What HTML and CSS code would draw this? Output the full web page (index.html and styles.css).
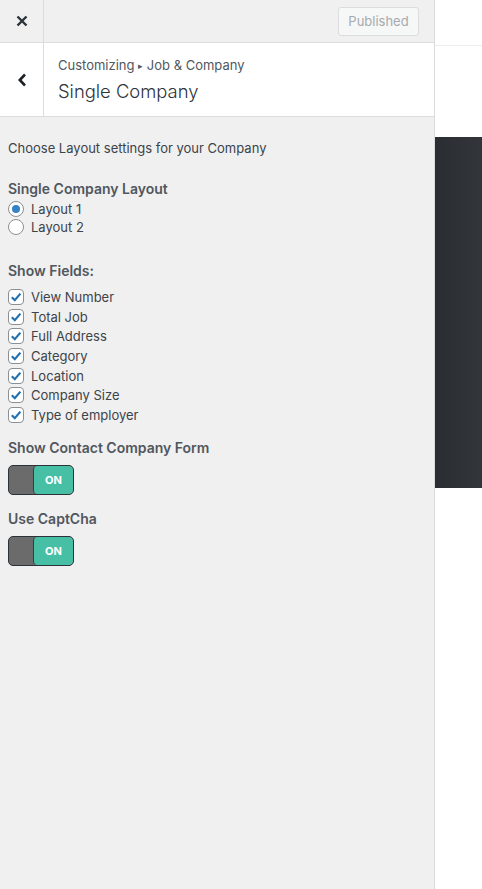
FILE: index.html
```html
<!DOCTYPE html>
<html lang="en">
<head>
  <meta charset="UTF-8">
  <title>Customizing Single Company</title>
  <link rel="stylesheet" href="styles.css">
</head>
<body>
  <div class="sidebar">
    <div class="topbar">
      <div class="close-btn">
        <svg width="12" height="12" viewBox="0 0 12 12"><path d="M1.5 1.5 L10.5 10.5 M10.5 1.5 L1.5 10.5" stroke="#2c3338" stroke-width="2.4"/></svg>
      </div>
      <div class="publish-wrap">
        <button class="publish-btn">Published</button>
      </div>
    </div>

    <div class="section-head">
      <div class="back-btn">
        <svg width="10" height="14" viewBox="0 0 10 14"><path d="M8 1.5 L2.8 7 L8 12.5" stroke="#1d2327" stroke-width="2.6" fill="none"/></svg>
      </div>
      <div class="section-title">
        <div class="crumb">Customizing <span class="sep">&#9656;</span> Job &amp; Company</div>
        <div class="title">Single Company</div>
      </div>
    </div>

    <div class="controls">
      <p class="desc">Choose Layout settings for your Company</p>

      <div class="control layout">
        <div class="control-label">Single Company Layout</div>
        <label class="opt"><span class="radio checked"></span>Layout 1</label>
        <label class="opt"><span class="radio"></span>Layout 2</label>
      </div>

      <div class="control fields">
        <div class="control-label">Show Fields:</div>
        <label class="opt check-opt"><span class="check"><svg width="12" height="12" viewBox="0 0 12 12"><path d="M1.8 6.2 L4.8 9.2 L10.4 2.6" stroke="#2271b1" stroke-width="2.2" fill="none"/></svg></span>View Number</label>
        <label class="opt check-opt"><span class="check"><svg width="12" height="12" viewBox="0 0 12 12"><path d="M1.8 6.2 L4.8 9.2 L10.4 2.6" stroke="#2271b1" stroke-width="2.2" fill="none"/></svg></span>Total Job</label>
        <label class="opt check-opt"><span class="check"><svg width="12" height="12" viewBox="0 0 12 12"><path d="M1.8 6.2 L4.8 9.2 L10.4 2.6" stroke="#2271b1" stroke-width="2.2" fill="none"/></svg></span>Full Address</label>
        <label class="opt check-opt"><span class="check"><svg width="12" height="12" viewBox="0 0 12 12"><path d="M1.8 6.2 L4.8 9.2 L10.4 2.6" stroke="#2271b1" stroke-width="2.2" fill="none"/></svg></span>Category</label>
        <label class="opt check-opt"><span class="check"><svg width="12" height="12" viewBox="0 0 12 12"><path d="M1.8 6.2 L4.8 9.2 L10.4 2.6" stroke="#2271b1" stroke-width="2.2" fill="none"/></svg></span>Location</label>
        <label class="opt check-opt"><span class="check"><svg width="12" height="12" viewBox="0 0 12 12"><path d="M1.8 6.2 L4.8 9.2 L10.4 2.6" stroke="#2271b1" stroke-width="2.2" fill="none"/></svg></span>Company Size</label>
        <label class="opt check-opt"><span class="check"><svg width="12" height="12" viewBox="0 0 12 12"><path d="M1.8 6.2 L4.8 9.2 L10.4 2.6" stroke="#2271b1" stroke-width="2.2" fill="none"/></svg></span>Type of employer</label>
      </div>

      <div class="control toggle-control">
        <div class="control-label">Show Contact Company Form</div>
        <div class="toggle"><span class="toggle-off"></span><span class="toggle-on">ON</span></div>
      </div>

      <div class="control toggle-control">
        <div class="control-label">Use CaptCha</div>
        <div class="toggle"><span class="toggle-off"></span><span class="toggle-on">ON</span></div>
      </div>
    </div>
  </div>

  <div class="preview">
    <div class="preview-bar"></div>
    <div class="preview-hero"></div>
  </div>
</body>
</html>
```

FILE: styles.css
```css
html, body {
  height: 100%;
}

body {
  margin: 0;
  display: flex;
  font-family: Inter, "Liberation Sans", sans-serif;
  color: #3c434a;
  background: #fff;
  overflow: hidden;
}

.sidebar {
  width: 434px;
  flex-shrink: 0;
  background: #f0f0f0;
  border-right: 1px solid #dcdcde;
  display: flex;
  flex-direction: column;
}

.topbar {
  height: 42px;
  display: flex;
  border-bottom: 1px solid #dcdcde;
}

.close-btn {
  width: 43px;
  border-right: 1px solid #dcdcde;
  display: flex;
  align-items: center;
  justify-content: center;
}

.publish-wrap {
  flex: 1;
  display: flex;
  align-items: center;
  justify-content: flex-end;
  padding-right: 15px;
}

.publish-btn {
  height: 29px;
  width: 81px;
  font-family: inherit;
  font-size: 13px;
  color: #a7aaad;
  background: #f6f7f7;
  border: 1px solid #dcdcde;
  border-radius: 3px;
  padding: 0;
}

.section-head {
  height: 73px;
  display: flex;
  background: #fff;
  border-bottom: 1px solid #dcdcde;
}

.back-btn {
  width: 43px;
  border-right: 1px solid #dcdcde;
  display: flex;
  align-items: center;
  justify-content: center;
}

.section-title {
  padding: 13px 0 0 14px;
}

.crumb {
  font-size: 13px;
  line-height: 18px;
  color: #50575e;
}

.crumb .sep {
  font-size: 9px;
  vertical-align: 1px;
  color: #50575e;
}

.title {
  margin-top: 3px;
  font-size: 18.4px;
  font-weight: 300;
  line-height: 26px;
  color: #2c3338;
}

.controls {
  padding: 22px 8px 0;
}

.desc {
  margin: 0 0 23px;
  font-size: 13px;
  line-height: 18px;
}

.control {
  margin-bottom: 25px;
}

.layout {
  margin-bottom: 26px;
}

.layout .control-label {
  margin-bottom: 2px;
}

.control-label {
  font-size: 14px;
  font-weight: 600;
  line-height: 18px;
  color: #50575e;
}

.opt {
  display: flex;
  align-items: center;
  gap: 7px;
  font-size: 13px;
  line-height: 18px;
}

.radio {
  width: 14px;
  height: 14px;
  border: 1px solid #8c8f94;
  border-radius: 50%;
  background: #fff;
  display: flex;
  align-items: center;
  justify-content: center;
}

.radio.checked::after {
  content: "";
  width: 8px;
  height: 8px;
  border-radius: 50%;
  background: #3582c4;
}

.fields .control-label {
  margin-bottom: 7px;
}

.check-opt {
  height: 19.7px;
}

.check {
  width: 14px;
  height: 14px;
  border: 1px solid #8c8f94;
  border-radius: 4px;
  background: #fff;
  display: flex;
  align-items: center;
  justify-content: center;
}

.fields {
  margin-bottom: 14px;
}

.toggle-control {
  margin-bottom: 15px;
}

.toggle-control .control-label {
  margin-bottom: 8px;
}

.toggle {
  width: 64px;
  height: 28px;
  border: 1px solid #2c3338;
  border-radius: 5px;
  background: #6b6b6b;
  display: flex;
  overflow: hidden;
}

.toggle-off {
  width: 24px;
}

.toggle-on {
  flex: 1;
  background: #47bfa5;
  border-left: 1px solid #3a3a3a;
  border-radius: 4px;
  color: #fff;
  font-size: 11px;
  font-weight: 700;
  display: flex;
  align-items: center;
  justify-content: center;
}

.preview {
  flex: 1;
  display: flex;
  flex-direction: column;
}

.preview-bar {
  height: 45px;
  border-bottom: 1px solid #ededed;
}

.preview-hero {
  margin-top: 91px;
  height: 351px;
  background: linear-gradient(90deg, #2a2d31, #32363a);
}
```
